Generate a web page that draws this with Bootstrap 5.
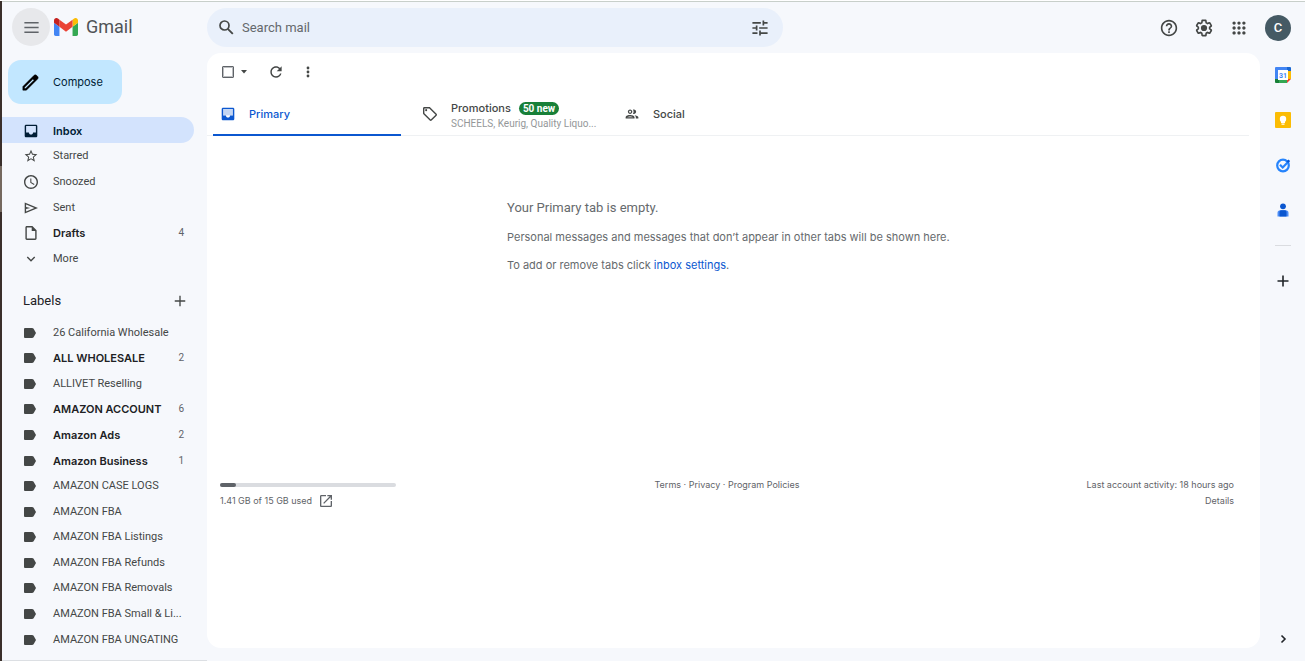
<!DOCTYPE html>
<html lang="en">
<head>
<meta charset="utf-8">
<meta name="viewport" content="width=device-width, initial-scale=1">
<title>Inbox - Gmail</title>
<link href="https://cdn.jsdelivr.net/npm/bootstrap@5.3.0/dist/css/bootstrap.min.css" rel="stylesheet">
<style>
  body { font-family: Roboto, "Liberation Sans", sans-serif; font-size: 11px; line-height: 16px; color: #444746; background: #f6f8fc; overflow: hidden; }
  .shell { padding-left: 2px; border-top: 1px solid #fff; background: linear-gradient(#3a2f2b 0 25%, #75695f 25% 32%, #3a2f2b 32%) left / 2px 100% no-repeat; }
  .topbar { border-top: 1px solid #c8cfca; height: 52px; }
  svg { display: block; fill: currentColor; flex: none; }
  .icon-btn { display: flex; align-items: center; justify-content: center; padding: 0; border: 0; background: none; color: #444746; flex: none; }
  .brand { width: 205px; padding: 6px 0 8px 10px; }
  .menu-btn { width: 38px; height: 38px; border-radius: 50%; background: #e7e8eb; color: #5f6368; }
  .wordmark { font-size: 18px; line-height: 24px; color: #505356; }
  .searchbox { width: 576px; height: 39px; margin-top: 6px; padding: 0 15px 0 12px; border-radius: 20px; background: #e9f0fb; }
  .searchbox input { border: 0; outline: 0; background: none; font-size: 13px; color: #5f6368; min-width: 0; padding: 0 0 0 8px; }
  .searchbox input::placeholder { color: #64686c; opacity: 1; }
  .tools { padding-right: 14px; gap: 17px; padding-top: 1px; }
  .avatar { width: 26px; height: 26px; border-radius: 50%; background: #455a64; color: #fff; font-size: 13px; font-weight: 500; }
  .sidebar { width: 205px; border-bottom: 1px solid #dcdfe3; overflow: hidden; }
  .compose { height: 44px; width: 114px; margin: 7px 0 13px 6px; border-radius: 13px; background: #c2e7ff; color: #001d35; padding: 0 0 0 14px; display: flex; align-items: center; gap: 14px; border: 0; font-family: Inter, Roboto, sans-serif; }
  .rows { display: grid; grid-auto-rows: 1fr; margin: 0; padding: 0; list-style: none; flex: none; }
  .folders { height: 154px; }
  .labels { height: 358px; }
  .rows a { display: flex; align-items: center; height: 100%; width: 192px; padding: 2px 10px 0 22px; color: #444746; text-decoration: none; border-radius: 0 13px 13px 0; }
  .rows svg { margin-right: 15px; color: #444746; }
  .labels svg { margin-right: 17px; }
  .rows .unread, .rows .chosen { font-family: Inter, Roboto, sans-serif; font-weight: 600; color: #202124; }
  .rows .chosen, .rows .chosen svg { background: #d3e3fd; color: #001d35; }
  .rows .tally { font-family: Roboto, sans-serif; font-weight: 400; font-size: 10px; color: #5f6368; margin-left: auto; }
  .labels-head { height: 48px; padding: 11px 5px 0 21px; width: 192px; flex: none; }
  .labels-head h2 { font-size: 13px; line-height: 16px; margin: 0; font-weight: 400; color: #202124; }
  .sheet { background: #fff; border-radius: 14px; margin-bottom: 13px; min-width: 0; }
  .actions { height: 38px; padding-left: 15px; }
  .actions input { appearance: none; width: 12px; height: 12px; margin: 0 6px 0 0; border: 1px solid #5f6368; outline: 0; border-radius: 1px; box-shadow: inset 0 0 0 1px #bbbdc0; }
  .actions .refresh { margin: 0 24px 0 22px; }
  .tabs { height: 45px; margin-right: 11px; border-bottom: 1px solid #eff1f3; }
  .tab { width: 202px; height: 45px; padding: 0 0 0 14px; display: flex; align-items: center; gap: 14px; border: 0; background: none; color: #444746; text-align: left; position: relative; font-family: Inter, Roboto, sans-serif; font-weight: 500; }
  .tab.on { color: #0b57d0; }
  .tab.on::after { content: ""; position: absolute; left: 6px; right: 8px; bottom: 0; height: 2px; background: #0b57d0; }
  .tab .fine { font-family: Roboto, sans-serif; font-size: 10px; line-height: 15px; font-weight: 400; color: #949799; }
  .pill { background: #188038; color: #fff; border-radius: 7px; font-family: Roboto, sans-serif; font-size: 10px; line-height: 13px; padding: 0 4px; font-weight: 700; }
  .empty { padding: 64px 0 0 300px; color: #666a6d; }
  .empty h1 { font-size: 13px; line-height: 16px; margin: 0 0 13px; font-weight: 400; }
  .empty p { margin: 0 0 12px; font-family: Inter, Roboto, sans-serif; }
  .empty a { color: #0b57d0; text-decoration: none; }
  .foot { margin-top: 204px; padding: 0 26px 0 13px; font-family: Inter, Roboto, sans-serif; font-size: 9px; color: #5f6368; }
  .foot a { color: inherit; text-decoration: none; }
  .foot .third { flex: 1 1 0; }
  .meter { width: 176px; height: 4px; border-radius: 2px; background: #dadce0; margin: 6px 0; }
  .meter > div { height: 4px; border-radius: 2px; background: #5f6368; }
  .rail { width: 45px; padding: 14px 0 13px; }
  .rail .apps { gap: 29px; }
  .rail hr { width: 16px; margin: 27px 0 28px; border-color: #dadce0; opacity: 1; }
</style>
</head>
<body>
<svg width="0" height="0" class="position-absolute" aria-hidden="true">
  <symbol id="tagged" viewBox="0 0 12 10"><path d="M1 0h7q1 0 1.600.8L12 5 9.600 9.200Q9 10 8 10H1Q0 10 0 9V1Q0 0 1 0z"/></symbol>
</svg>
<div class="shell vh-100 d-flex flex-column">
  <header class="topbar d-flex flex-shrink-0">
    <div class="brand d-flex">
      <button class="icon-btn menu-btn" aria-label="Main menu"><svg width="19" height="19" viewBox="0 0 24 24"><path d="M3 5h18v2H3zM3 11h18v2H3zM3 17h18v2H3z"/></svg></button>
      <a href="#" class="d-flex align-items-center text-decoration-none ms-1">
        <svg width="24" height="18" viewBox="52 42 88 66"><path fill="#4285f4" d="M58 108h14V74L52 59v43c0 3.320 2.690 6 6 6"/><path fill="#34a853" d="M120 108h14c3.320 0 6-2.690 6-6V59l-20 15"/><path fill="#fbbc04" d="M120 48v26l20-15v-8c0-7.420-8.470-11.650-14.400-7.200"/><path fill="#ea4335" d="M72 74V48l24 18 24-18v26L96 92"/><path fill="#c5221f" d="M52 51v8l20 15V48l-5.600-4.200c-5.940-4.450-14.400-.22-14.400 7.200"/></svg>
        <span class="wordmark ms-2">Gmail</span>
      </a>
    </div>
    <form class="searchbox d-flex align-items-center" role="search">
      <button type="button" class="icon-btn" aria-label="Search"><svg width="15" height="15" viewBox="0 0 15 15"><circle cx="5.500" cy="5.500" r="4.500" fill="none" stroke="currentColor" stroke-width="1.700"/><path d="M8.800 8.800l5 5" stroke="currentColor" stroke-width="1.900"/></svg></button>
      <input class="flex-grow-1" type="text" placeholder="Search mail" aria-label="Search mail">
      <button type="button" class="icon-btn" aria-label="Show search options"><svg width="16" height="16" viewBox="2.500 2.500 19 19"><path d="M3 17v2h6v-2H3zM3 5v2h10V5H3zm10 16v-2h8v-2h-8v-2h-2v6h2zM7 9v2H3v2h4v2h2V9H7zm14 4v-2H11v2h10zm-6-4h2V7h4V5h-4V3h-2v6z"/></svg></button>
    </form>
    <div class="tools d-flex align-items-center ms-auto">
      <button class="icon-btn" aria-label="Support"><svg width="18" height="18" viewBox="1 1 22 22"><path d="M11 18h2v-2h-2v2zm1-16C6.480 2 2 6.480 2 12s4.480 10 10 10 10-4.480 10-10S17.520 2 12 2zm0 18c-4.410 0-8-3.590-8-8s3.590-8 8-8 8 3.590 8 8-3.590 8-8 8zm0-14c-2.210 0-4 1.790-4 4h2c0-1.100.9-2 2-2s2 .9 2 2c0 2-3 1.750-3 5h2c0-2.250 3-2.500 3-5 0-2.210-1.790-4-4-4z"/></svg></button>
      <button class="icon-btn" aria-label="Settings"><svg width="18" height="18" viewBox="1 1 22 22"><path d="M13.850 22.250h-3.700c-.74 0-1.360-.54-1.450-1.270l-.27-1.890c-.27-.14-.53-.29-.79-.46l-1.800.72c-.7.26-1.470-.03-1.810-.65L2.200 15.530c-.35-.66-.2-1.440.36-1.880l1.530-1.190c-.01-.15-.02-.3-.02-.46 0-.15.01-.31.02-.46l-1.520-1.190c-.59-.45-.74-1.260-.37-1.880l1.850-3.190c.34-.62 1.110-.9 1.790-.63l1.810.73c.26-.17.52-.32.78-.46l.27-1.910c.09-.7.71-1.250 1.440-1.250h3.700c.74 0 1.360.54 1.450 1.270l.27 1.890c.27.14.53.29.79.46l1.800-.72c.71-.26 1.480.03 1.820.65l1.840 3.180c.36.66.2 1.440-.36 1.880l-1.520 1.190c.01.15.02.3.02.46s-.01.31-.02.46l1.520 1.190c.56.45.72 1.230.37 1.860l-1.860 3.220c-.34.62-1.110.9-1.800.63l-1.800-.72c-.26.17-.52.32-.78.46l-.27 1.910c-.1.680-.72 1.220-1.460 1.220zm-3.230-2h2.760l.37-2.550.53-.22c.44-.18.880-.44 1.340-.78l.45-.34 2.380.96 1.380-2.400-2.030-1.580.07-.56c.03-.26.06-.51.06-.78s-.03-.53-.06-.78l-.07-.56 2.030-1.580-1.390-2.400-2.390.96-.45-.35c-.42-.32-.870-.58-1.330-.77l-.52-.22-.37-2.550h-2.760l-.37 2.550-.53.21c-.44.19-.880.44-1.340.79l-.45.33-2.380-.95-1.390 2.390 2.030 1.580-.07.56a7 7 0 0 0-.06.79c0 .26.020.53.06.78l.07.56-2.030 1.580 1.380 2.400 2.390-.96.45.35c.43.33.860.58 1.330.77l.53.22z"/><circle cx="12" cy="12" r="3.800"/></svg></button>
      <button class="icon-btn" aria-label="Google apps"><svg width="18" height="18" viewBox="1 1 22 22"><path d="M6 8c1.100 0 2-.9 2-2s-.9-2-2-2-2 .9-2 2 .9 2 2 2zm6 12c1.100 0 2-.9 2-2s-.9-2-2-2-2 .9-2 2 .9 2 2 2zm-6 0c1.100 0 2-.9 2-2s-.9-2-2-2-2 .9-2 2 .9 2 2 2zm0-6c1.100 0 2-.9 2-2s-.9-2-2-2-2 .9-2 2 .9 2 2 2zm6 0c1.100 0 2-.9 2-2s-.9-2-2-2-2 .9-2 2 .9 2 2 2zm4-8c0 1.100.9 2 2 2s2-.9 2-2-.9-2-2-2-2 .9-2 2zm-4 2c1.100 0 2-.9 2-2s-.9-2-2-2-2 .9-2 2 .9 2 2 2zm6 6c1.100 0 2-.9 2-2s-.9-2-2-2-2 .9-2 2 .9 2 2 2zm0 6c1.100 0 2-.9 2-2s-.9-2-2-2-2 .9-2 2 .9 2 2 2z"/></svg></button>
      <button class="icon-btn avatar" aria-label="Google Account">C</button>
    </div>
  </header>

  <div class="d-flex flex-grow-1" style="min-height:0">
    <nav class="sidebar d-flex flex-column flex-shrink-0">
      <button class="compose flex-shrink-0"><svg width="17" height="17" viewBox="2 2 20 20"><path d="M20.410 4.940l-1.350-1.350c-.78-.78-2.050-.78-2.830 0L3 16.820V21h4.180L20.410 7.770c.79-.78.79-2.050 0-2.830zm-14 14.120L5 19v-1.360l9.820-9.820 1.410 1.410-9.820 9.830z" fill="#000" stroke="#000" stroke-width=".6"/></svg>Compose</button>
      <ul class="rows folders">
        <li><a class="chosen" href="#"><svg width="14" height="14" viewBox="2 2 20 20"><path d="M19 3H5c-1.100 0-2 .9-2 2v14c0 1.100.9 2 2 2h14c1.100 0 2-.9 2-2V5c0-1.100-.9-2-2-2zm0 11h-4c0 1.660-1.350 3-3 3s-3-1.340-3-3H5V5h14v9z" fill-rule="evenodd"/></svg>Inbox</a></li>
        <li><a href="#"><svg width="14" height="14" viewBox="1 1 22 22"><path d="M22 9.240l-7.190-.62L12 2 9.190 8.630 2 9.240l5.460 4.730L5.820 21 12 17.270 18.180 21l-1.630-7.030L22 9.240zM12 15.400l-3.760 2.270 1-4.280-3.320-2.880 4.380-.38L12 6.100l1.710 4.040 4.380.38-3.320 2.880 1 4.280L12 15.400z"/></svg>Starred</a></li>
        <li><a href="#"><svg width="14" height="14" viewBox="2 2 20 20"><path d="M11.990 2C6.470 2 2 6.480 2 12s4.470 10 9.990 10C17.520 22 22 17.520 22 12S17.520 2 11.990 2zM12 20c-4.420 0-8-3.580-8-8s3.580-8 8-8 8 3.580 8 8-3.580 8-8 8zm.5-13H11v6l5.250 3.150.75-1.230-4.500-2.670z"/></svg>Snoozed</a></li>
        <li><a href="#"><svg width="14" height="14" viewBox="2 2 20 20"><path d="M3 4v16l19-8L3 4zm2 13v-3.500l6-1.500-6-1.500V7l11.850 5L5 17z"/></svg>Sent</a></li>
        <li><a class="unread" href="#"><svg width="14" height="14" viewBox="2 2 20 20"><path d="M14 2H6c-1.100 0-2 .9-2 2v16c0 1.100.9 2 2 2h12c1.100 0 2-.9 2-2V8l-6-6zM6 20V4h7v5h5v11H6z"/></svg>Drafts<span class="tally">4</span></a></li>
        <li><a href="#"><svg width="14" height="14" viewBox="2 2 20 20"><path d="M16.590 8.590L12 13.170 7.410 8.590 6 10l6 6 6-6z"/></svg>More</a></li>
      </ul>
      <div class="labels-head d-flex align-items-center justify-content-between">
        <h2>Labels</h2>
        <button class="icon-btn" aria-label="Create new label"><svg width="18" height="18" viewBox="0 0 24 24"><path d="M19 12.900h-6.100V19h-1.800v-6.100H5v-1.800h6.100V5h1.800v6.100H19z"/></svg></button>
      </div>
      <ul class="rows labels">
        <li><a href="#"><svg width="12" height="10"><use href="#tagged"/></svg>26 California Wholesale</a></li>
        <li><a class="unread" href="#"><svg width="12" height="10"><use href="#tagged"/></svg>ALL WHOLESALE<span class="tally">2</span></a></li>
        <li><a href="#"><svg width="12" height="10"><use href="#tagged"/></svg>ALLIVET Reselling</a></li>
        <li><a class="unread" href="#"><svg width="12" height="10"><use href="#tagged"/></svg>AMAZON ACCOUNT<span class="tally">6</span></a></li>
        <li><a class="unread" href="#"><svg width="12" height="10"><use href="#tagged"/></svg>Amazon Ads<span class="tally">2</span></a></li>
        <li><a class="unread" href="#"><svg width="12" height="10"><use href="#tagged"/></svg>Amazon Business<span class="tally">1</span></a></li>
        <li><a href="#"><svg width="12" height="10"><use href="#tagged"/></svg>AMAZON CASE LOGS</a></li>
        <li><a href="#"><svg width="12" height="10"><use href="#tagged"/></svg>AMAZON FBA</a></li>
        <li><a href="#"><svg width="12" height="10"><use href="#tagged"/></svg>AMAZON FBA Listings</a></li>
        <li><a href="#"><svg width="12" height="10"><use href="#tagged"/></svg>AMAZON FBA Refunds</a></li>
        <li><a href="#"><svg width="12" height="10"><use href="#tagged"/></svg>AMAZON FBA Removals</a></li>
        <li><a href="#"><svg width="12" height="10"><use href="#tagged"/></svg>AMAZON FBA Small &amp; Li...</a></li>
        <li><a href="#"><svg width="12" height="10"><use href="#tagged"/></svg>AMAZON FBA UNGATING</a></li>
        <li><a href="#"><svg width="12" height="10"><use href="#tagged"/></svg>AMAZON Selling</a></li>
      </ul>
    </nav>

    <main class="sheet flex-grow-1">
      <div class="actions d-flex align-items-center">
        <input type="checkbox" aria-label="Select all">
        <button class="icon-btn" aria-label="Select options"><svg width="8" height="4" viewBox="0 0 8 4"><path d="M1 0h6L4 3.500z"/></svg></button>
        <button class="icon-btn refresh" aria-label="Refresh"><svg width="12" height="12" viewBox="3.500 3.500 17 17"><path d="M17.650 6.350C16.200 4.900 14.210 4 12 4c-4.420 0-7.990 3.580-7.990 8s3.570 8 7.990 8c3.730 0 6.840-2.550 7.730-6h-2.080c-.82 2.330-3.040 4-5.650 4-3.310 0-6-2.690-6-6s2.690-6 6-6c1.660 0 3.140.69 4.220 1.780L13 11h7V4l-2.350 2.350z"/></svg></button>
        <button class="icon-btn" aria-label="More options"><svg width="4" height="12" viewBox="0 0 4 12"><circle cx="2" cy="2" r="1.400"/><circle cx="2" cy="6" r="1.400"/><circle cx="2" cy="10" r="1.400"/></svg></button>
      </div>
      <div class="tabs d-flex" role="tablist">
        <button class="tab on" role="tab"><svg width="14" height="14" viewBox="2 2 20 20"><path d="M5 5h14v9H5z" opacity=".25"/><path d="M19 3H5c-1.100 0-2 .9-2 2v14c0 1.100.9 2 2 2h14c1.100 0 2-.9 2-2V5c0-1.100-.9-2-2-2zm0 11h-4c0 1.660-1.350 3-3 3s-3-1.340-3-3H5V5h14v9z"/></svg>Primary</button>
        <button class="tab" role="tab"><svg width="14" height="14" viewBox="2 2 20 20"><path d="M21.410 11.580l-9-9C12.050 2.220 11.550 2 11 2H4c-1.100 0-2 .9-2 2v7c0 .55.220 1.050.590 1.420l9 9c.36.36.860.580 1.410.580s1.050-.22 1.410-.59l7-7c.37-.36.590-.86.590-1.410s-.23-1.060-.59-1.420zM13 20.010L4 11V4h7v-.01l9 9-7 7.020z"/><circle cx="6.500" cy="6.500" r="1.500"/></svg><span class="text-nowrap pt-1"><span class="d-flex align-items-center gap-2">Promotions<span class="pill">50 new</span></span><span class="fine d-block">SCHEELS, Keurig, Quality Liquo...</span></span></button>
        <button class="tab" role="tab"><svg width="14" height="14" viewBox="1 1 22 22"><path d="M9 13.750c-2.340 0-7 1.170-7 3.500V19h14v-1.750c0-2.330-4.660-3.500-7-3.500zM4.340 17c.84-.58 2.870-1.250 4.660-1.250s3.820.67 4.660 1.250H4.340zM9 12c1.930 0 3.500-1.570 3.500-3.500S10.930 5 9 5 5.500 6.570 5.500 8.500 7.070 12 9 12zm0-5c.83 0 1.500.67 1.500 1.500S9.830 10 9 10s-1.500-.67-1.500-1.500S8.170 7 9 7zm7.040 6.810c1.160.84 1.960 1.960 1.960 3.440V19h4v-1.750c0-2.020-3.500-3.170-5.960-3.440zM15 12c1.930 0 3.500-1.570 3.500-3.500S16.930 5 15 5c-.54 0-1.040.130-1.500.35.63.89 1 1.980 1 3.150s-.37 2.260-1 3.150c.46.22.96.35 1.500.35z"/></svg>Social</button>
      </div>
      <section class="empty">
        <h1>Your Primary tab is empty.</h1>
        <p>Personal messages and messages that don’t appear in other tabs will be shown here.</p>
        <p>To add or remove tabs click <a href="#">inbox settings</a>.</p>
      </section>
      <footer class="foot d-flex">
        <div class="third">
          <div class="meter"><div style="width:9%"></div></div>
          <div class="d-flex align-items-center gap-2">1.41 GB of 15 GB used <a href="#" aria-label="Manage storage"><svg width="12" height="12" viewBox="3 3 18 18"><path d="M19 19H5V5h7V3H5c-1.110 0-2 .9-2 2v14c0 1.100.890 2 2 2h14c1.100 0 2-.9 2-2v-7h-2v7zM14 3v2h3.590l-9.830 9.830 1.410 1.410L19 6.410V10h2V3h-7z"/></svg></a></div>
        </div>
        <div class="third text-center"><a href="#">Terms</a> · <a href="#">Privacy</a> · <a href="#">Program Policies</a></div>
        <div class="third text-end">Last account activity: 18 hours ago<br><a href="#">Details</a></div>
      </footer>
    </main>

    <aside class="rail d-flex flex-column align-items-center flex-shrink-0">
      <div class="apps d-flex flex-column align-items-center">
        <button class="icon-btn" aria-label="Calendar"><svg width="16" height="16" viewBox="0 0 16 16"><path fill="#4285f4" d="M1 0h11v4H4v8H0V1q0-1 1-1z"/><path fill="#1967d2" d="M12 0h3q1 0 1 1v3h-4z"/><path fill="#fbbc04" d="M12 4h4v8h-4z"/><path fill="#188038" d="M0 12h4v4H1q-1 0-1-1z"/><path fill="#34a853" d="M4 12h8v4H4z"/><path fill="#ea4335" d="M12 12h4l-4 4z"/><path fill="#fff" d="M3 3h10v10H3z"/><text x="8" y="11" font-size="7" font-weight="700" text-anchor="middle" fill="#4285f4">31</text></svg></button>
        <button class="icon-btn" aria-label="Keep"><svg width="16" height="16" viewBox="0 0 16 16"><rect width="16" height="16" rx="1" fill="#fbbc04"/><circle cx="8" cy="7" r="3.200" fill="#fff"/><path fill="#fff" d="M6 9h4v2H6zM6.500 11.600h3v1.200h-3z"/></svg></button>
        <button class="icon-btn" aria-label="Tasks"><svg width="16" height="16" viewBox="0 0 16 16"><circle cx="8" cy="8.500" r="5.800" fill="none" stroke="#2684fc" stroke-width="2.200"/><path d="M5 7.800l2.700 2.700L14 4" fill="none" stroke="#2684fc" stroke-width="2.200"/><path d="M11.500 4.500l2-2 1.600 1.600-2 2z" fill="#0b57d0"/></svg></button>
        <button class="icon-btn" aria-label="Contacts"><svg width="16" height="16" viewBox="0 0 16 16"><circle cx="8" cy="4.300" r="2.900" fill="#0b57d0"/><path fill="#4c8df6" d="M2.500 14.500V11Q2.500 8.300 5.500 8.300h5q3 0 3 2.700v3.500z"/><path fill="#0b57d0" d="M4.500 14.500V10Q4.500 8.300 6 8.300h4q1.500 0 1.500 1.700v4.500z"/></svg></button>
      </div>
      <hr>
      <button class="icon-btn text-dark" aria-label="Get add-ons"><svg width="14" height="14" viewBox="0 0 14 14"><path d="M6.200 1.500h1.600v4.700h4.700v1.600H7.800v4.700H6.200V7.800H1.500V6.200h4.700z"/></svg></button>
      <button class="icon-btn text-dark mt-auto" aria-label="Hide side panel"><svg width="8" height="18" viewBox="0 0 8 18"><path d="M2.500 5.500L6 9l-3.500 3.500" fill="none" stroke="currentColor" stroke-width="1.600"/></svg></button>
    </aside>
  </div>
</div>
<script src="https://cdn.jsdelivr.net/npm/bootstrap@5.3.0/dist/js/bootstrap.bundle.min.js"></script>
</body>
</html>
